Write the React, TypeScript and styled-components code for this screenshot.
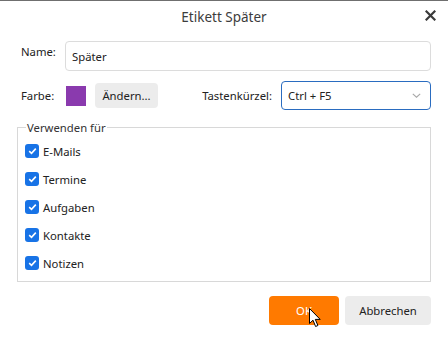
import React from "react";
import styled, { createGlobalStyle } from "styled-components";

const GlobalStyle = createGlobalStyle`
  html, body {
    margin: 0;
    padding: 0;
    background: #ffffff;
  }
  body {
    font-family: "Noto Sans", "Open Sans", sans-serif;
    font-size: 11.3px;
    color: #222;
  }
`;

const kinds = ["E-Mails", "Termine", "Aufgaben", "Kontakte", "Notizen"];

export default function App() {
  return (
    <>
      <GlobalStyle />
      <Dialog>
        <Header>
          <Title>Etikett Später</Title>
          <CloseButton aria-label="Schließen">
            <svg width="11" height="11" viewBox="0 0 11 11">
              <path
                d="M1.5 1.5 L9.5 9.5 M9.5 1.5 L1.5 9.5"
                stroke="#3a3a3a"
                strokeWidth="2.2"
                strokeLinecap="square"
              />
            </svg>
          </CloseButton>
        </Header>
        <Body>
          <Row>
            <Label $top>Name:</Label>
            <TextInput defaultValue="Später" />
          </Row>
          <ColorRow>
            <Label>Farbe:</Label>
            <Swatch />
            <GrayButton>Ändern...</GrayButton>
            <Shortcut>
              <ShortcutLabel>Tastenkürzel:</ShortcutLabel>
              <Select>
                <span>Ctrl + F5</span>
                <svg width="9" height="5" viewBox="0 0 9 5">
                  <path
                    d="M0.8 0.8 L4.5 4.2 L8.2 0.8"
                    fill="none"
                    stroke="#a8a8a8"
                    strokeWidth="1.1"
                  />
                </svg>
              </Select>
            </Shortcut>
          </ColorRow>
          <Group>
            <Legend>Verwenden für</Legend>
            {kinds.map((k) => (
              <CheckRow key={k}>
                <Check>
                  <svg width="9" height="8" viewBox="0 0 9 8">
                    <path
                      d="M1.2 4.2 L3.5 6.3 L7.8 1.6"
                      fill="none"
                      stroke="#fff"
                      strokeWidth="1.6"
                    />
                  </svg>
                </Check>
                <span>{k}</span>
              </CheckRow>
            ))}
          </Group>
          <Footer>
            <PrimaryButton>
              OK
              <Cursor width="13" height="20" viewBox="0 0 13 20">
                <path
                  d="M0.5 0.5 L0.5 15.5 L4 12.2 L6.6 18.5 L8.9 17.5 L6.3 11.4 L11.2 11.4 Z"
                  fill="#fff"
                  stroke="#000"
                  strokeWidth="1"
                  strokeLinejoin="round"
                />
              </Cursor>
            </PrimaryButton>
            <GrayButton $wide>Abbrechen</GrayButton>
          </Footer>
        </Body>
      </Dialog>
    </>
  );
}

const Dialog = styled.div`
  width: 448px;
  height: 337px;
  box-sizing: border-box;
  border-top: 1px solid #6f6f6f;
  background: #fff;
  display: flex;
  flex-direction: column;
`;

const Header = styled.div`
  position: relative;
  height: 32px;
  display: flex;
  align-items: center;
  justify-content: center;
`;

const Title = styled.div`
  font-size: 13.5px;
  color: #3c3c3c;
`;

const CloseButton = styled.div`
  position: absolute;
  right: 12px;
  top: 9px;
  width: 11px;
  height: 11px;
  display: flex;
`;

const Body = styled.div`
  padding: 8px 17px 0 17px;
  display: flex;
  flex-direction: column;
`;

const Row = styled.div`
  display: flex;
  align-items: flex-start;
`;

const Label = styled.div<{ $top?: boolean }>`
  width: 44px;
  padding-left: 4px;
  flex-shrink: 0;
  color: #222;
  ${({ $top }) => $top && `padding-top: 3px;`}
`;

const TextInput = styled.input`
  flex: 1;
  height: 30px;
  box-sizing: border-box;
  border: 1px solid #dcdcdc;
  border-radius: 4px;
  padding: 0 6px;
  font-family: inherit;
  font-size: 11.3px;
  color: #222;
  outline: none;
`;

const ColorRow = styled.div`
  margin-top: 10px;
  display: flex;
  align-items: center;
  height: 29px;
`;

const Swatch = styled.div`
  width: 20px;
  height: 20px;
  margin-left: 1px;
  background: #8a3aae;
`;

const GrayButton = styled.div<{ $wide?: boolean }>`
  margin-left: 9px;
  width: 63px;
  height: 25px;
  display: flex;
  align-items: center;
  justify-content: center;
  background: #ececec;
  border-radius: 4px;
  color: #222;
  box-sizing: border-box;
  ${({ $wide }) =>
    $wide &&
    `
    margin-left: 6px;
    width: 86px;
    height: 29px;
  `}
`;

const Shortcut = styled.div`
  margin-left: auto;
  display: flex;
  align-items: center;
  gap: 9px;
`;

const ShortcutLabel = styled.div`
  color: #222;
`;

const Select = styled.div`
  width: 150px;
  height: 29px;
  box-sizing: border-box;
  border: 1px solid #2a6cc0;
  border-radius: 4px;
  display: flex;
  align-items: center;
  justify-content: space-between;
  padding: 0 9px 0 6px;
`;

const Group = styled.fieldset`
  margin: 10px 0 0 0;
  padding: 2px 0 4px 7px;
  border: 1px solid #d8d8d8;
  min-width: 0;
`;

const Legend = styled.legend`
  margin-left: 1px;
  padding: 0 1px;
  color: #333;
`;

const CheckRow = styled.div`
  height: 28px;
  display: flex;
  align-items: center;
  gap: 4px;
`;

const Check = styled.span`
  width: 14px;
  height: 14px;
  border-radius: 3px;
  background: #1873e6;
  display: flex;
  align-items: center;
  justify-content: center;
`;

const Footer = styled.div`
  margin-top: 14px;
  display: flex;
  justify-content: flex-end;
`;

const PrimaryButton = styled.div`
  position: relative;
  width: 70px;
  height: 29px;
  border-radius: 4px;
  background: #ff7a00;
  color: #fff;
  display: flex;
  align-items: center;
  justify-content: center;
`;

const Cursor = styled.svg`
  position: absolute;
  left: 40px;
  top: 12px;
`;
